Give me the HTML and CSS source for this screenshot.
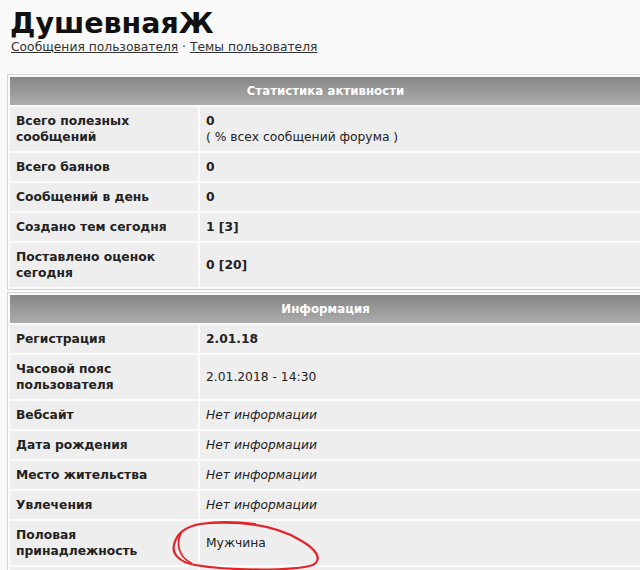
FILE: index.html
```html
<!DOCTYPE html>
<html lang="ru">
<head>
<meta charset="utf-8">
<title>ДушевнаяЖ</title>
<link rel="stylesheet" href="styles.css">
</head>
<body>
<div class="page">
  <h1 class="title">ДушевнаяЖ</h1>
  <div class="links"><a href="#">Сообщения пользователя</a> · <a href="#">Темы пользователя</a></div>

  <table class="box">
    <tr><th colspan="2">Статистика активности</th></tr>
    <tr><td class="key">Всего полезных сообщений</td><td class="val"><b>0</b><br>( % всех сообщений форума )</td></tr>
    <tr><td class="key">Всего баянов</td><td class="val"><b>0</b></td></tr>
    <tr><td class="key">Сообщений в день</td><td class="val"><b>0</b></td></tr>
    <tr><td class="key">Создано тем сегодня</td><td class="val"><b>1 [3]</b></td></tr>
    <tr><td class="key">Поставлено оценок сегодня</td><td class="val"><b>0 [20]</b></td></tr>
  </table>

  <table class="box">
    <tr><th colspan="2">Информация</th></tr>
    <tr><td class="key">Регистрация</td><td class="val"><b>2.01.18</b></td></tr>
    <tr><td class="key">Часовой пояс пользователя</td><td class="val">2.01.2018 - 14:30</td></tr>
    <tr><td class="key">Вебсайт</td><td class="val"><i>Нет информации</i></td></tr>
    <tr><td class="key">Дата рождения</td><td class="val"><i>Нет информации</i></td></tr>
    <tr><td class="key">Место жительства</td><td class="val"><i>Нет информации</i></td></tr>
    <tr><td class="key">Увлечения</td><td class="val"><i>Нет информации</i></td></tr>
    <tr><td class="key">Половая принадлежность</td><td class="val circled">Мужчина<svg class="ring" width="154" height="52" viewBox="0 0 154 52"><path d="M40 3 C 80 1, 110 8, 130 20 C 146 29, 153 39, 143 45 C 125 51, 60 51, 25 45 C 8 42, 2 33, 4 25 C 6 15, 14 7, 30 4 C 50 1, 70 2, 85 4" fill="none" stroke="#e0242a" stroke-width="2.2" stroke-linecap="round"/><path d="M11 13 C 6 23, 8 36, 21 43" fill="none" stroke="#e0242a" stroke-width="1.8" stroke-linecap="round"/></svg></td></tr>
    <tr><td class="key">&nbsp;</td><td class="val">&nbsp;</td></tr>
  </table>
</div>
</body>
</html>
```

FILE: styles.css
```css
html, body {
  margin: 0;
  padding: 0;
  background: #f9f9f9;
  overflow: hidden;
}
.page {
  width: 660px;
  padding: 7px 0 0 8px;
  font-family: "DejaVu Sans", Verdana, sans-serif;
  font-size: 12.3px;
  color: #222;
}
.title {
  margin: 0 0 0 2px;
  font-size: 28.5px;
  line-height: 34px;
  font-weight: bold;
  color: #111;
}
.links {
  margin: -2px 0 0 3px;
  line-height: 16px;
  color: #333;
}
.links a {
  color: #333;
  text-decoration: underline;
}
.box {
  width: 637px;
  border: 1px solid #d4d4d4;
  border-spacing: 2px;
  background: #fbfbfb;
  margin: 0 0 2px -1px;
}
.links + .box {
  margin-top: 19px;
}
.box th {
  height: 28px;
  padding: 0;
  background: linear-gradient(#868686, #acacac);
  color: #fff;
  font-weight: bold;
  font-size: 11.8px;
  text-align: center;
}
.box td {
  background: #eeeeee;
  padding: 6px 6px;
  line-height: 16px;
  vertical-align: middle;
  text-align: left;
}
.box td.key {
  width: 176px;
  font-weight: bold;
  color: #222;
}
.box td.val {
  color: #222;
}
.circled {
  position: relative;
}
.ring {
  position: absolute;
  left: -30px;
  top: -1px;
}
```
